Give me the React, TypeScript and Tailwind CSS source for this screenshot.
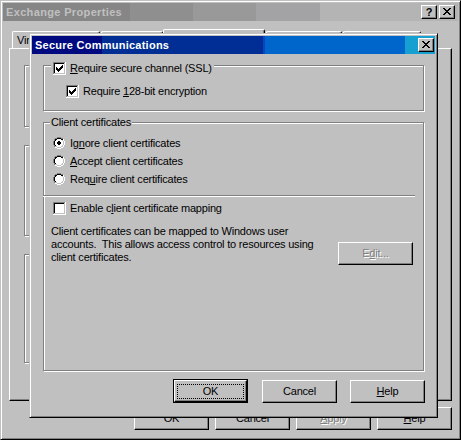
import React from "react";

// classic 3D palette
const PAL: Record<string, string> = {
  G: "#808080",
  K: "#000000",
  W: "#ffffff",
  F: "#c0c0c0",
};

// tiny pixel-map renderer for the checkbox / radio / caption glyphs
function Pix({ rows }: { rows: string[] }) {
  const rects: React.ReactNode[] = [];
  rows.forEach((row, y) => {
    let x = 0;
    while (x < row.length) {
      const c = row[x];
      let e = x + 1;
      while (e < row.length && row[e] === c) e++;
      if (c !== ".") {
        rects.push(<rect key={`${x}-${y}`} x={x} y={y} width={e - x} height={1} fill={PAL[c]} />);
      }
      x = e;
    }
  });
  return (
    <svg width={rows[0].length} height={rows.length} shapeRendering="crispEdges" className="block shrink-0">
      {rects}
    </svg>
  );
}

const TICK = ["......K", ".....KK", "K...KKK", "KK.KKK.", "KKKKK..", ".KKK...", "..K...."];

function checkRows(on: boolean) {
  const rows = ["GGGGGGGGGGGGW", "GKKKKKKKKKKFW"];
  for (let i = 0; i < 9; i++) {
    const inner = "WWWWWWWWW".split("");
    if (on && i >= 1 && i <= 7) {
      for (let j = 0; j < 7; j++) if (TICK[i - 1][j] === "K") inner[j + 1] = "K";
    }
    rows.push("GK" + inner.join("") + "FW");
  }
  rows.push("GFFFFFFFFFFFW");
  rows.push("WWWWWWWWWWWWW");
  return rows;
}

const RADIO = [
  "....GGGG....",
  "..GGKKKKGG..",
  ".GKKWWWWKKW.",
  ".GKWWWWWWFW.",
  "GKWWWWWWWWFW",
  "GKWWWWWWWWFW",
  "GKWWWWWWWWFW",
  "GKWWWWWWWWFW",
  ".GKWWWWWWFW.",
  ".GFFWWWWFFW.",
  "..WWFFFFWW..",
  "....WWWW....",
];

function radioRows(on: boolean) {
  if (!on) return RADIO;
  return RADIO.map((row, y) => {
    const r = row.split("");
    if (y === 4 || y === 7) {
      r[5] = "K";
      r[6] = "K";
    }
    if (y === 5 || y === 6) for (let x = 4; x <= 7; x++) r[x] = "K";
    return r.join("");
  });
}

const CLOSE_X = ["KK....KK", ".KK..KK.", "..KKKK..", "...KK...", "..KKKK..", ".KK..KK.", "KK....KK"];

const BODY_FONT = "font-['Liberation_Sans',Arial,sans-serif] text-[11px] leading-[13px] tracking-[-0.2px] text-black";
const RAISED = "border border-t-white border-l-white border-r-black border-b-black shadow-[inset_-1px_-1px_0_#808080]";
const ETCHED = "border border-[#808080] shadow-[inset_1px_1px_0_#fff,1px_1px_0_#fff]";
const WINDOW_FRAME =
  "border border-t-[#c0c0c0] border-l-[#c0c0c0] border-r-black border-b-black p-[2px] shadow-[inset_1px_1px_0_#fff,inset_-1px_-1px_0_#808080]";

function CaptionButton({ children }: { children: React.ReactNode }) {
  return (
    <div className={`flex h-[14px] w-[16px] items-start justify-center bg-[#c0c0c0] pt-[2px] ${RAISED}`}>{children}</div>
  );
}

function Check({ on, children }: { on: boolean; children: React.ReactNode }) {
  return (
    <div className="flex h-[13px] items-center gap-[4px]">
      <Pix rows={checkRows(on)} />
      <span className="whitespace-nowrap">{children}</span>
    </div>
  );
}

function Radio({ on, children }: { on: boolean; children: React.ReactNode }) {
  return (
    <div className="flex h-[13px] items-start gap-[5px]">
      <Pix rows={radioRows(on)} />
      <span className="whitespace-nowrap">{children}</span>
    </div>
  );
}

function PushButton({
  children,
  disabled,
  className = "",
}: {
  children: React.ReactNode;
  disabled?: boolean;
  className?: string;
}) {
  return (
    <div
      className={`flex h-[23px] w-[75px] shrink-0 items-center justify-center bg-[#c0c0c0] ${RAISED} ${
        disabled ? "text-[#808080] [text-shadow:1px_1px_0_#fff]" : ""
      } ${className}`}
    >
      {children}
    </div>
  );
}

function DefaultButton({ children }: { children: React.ReactNode }) {
  return (
    <div className="h-[24px] w-[75px] shrink-0 border border-black bg-[#c0c0c0]">
      <div className={`flex h-full w-full items-center justify-center ${RAISED} border-t-white`}>
        <div className="flex h-[15px] w-[67px] items-center justify-center border border-dotted border-black">
          {children}
        </div>
      </div>
    </div>
  );
}

function Tab({ label, className = "", selected }: { label: string; className?: string; selected?: boolean }) {
  return (
    <div
      className={`shrink-0 overflow-hidden whitespace-nowrap rounded-t-[2px] border-t border-r border-l border-t-white border-l-white border-r-black px-[4px] pt-[2px] shadow-[inset_-1px_0_0_#808080] ${
        selected ? "h-[19px]" : "h-[17px]"
      } ${className}`}
    >
      {label}
    </div>
  );
}

function ExchangeProperties() {
  return (
    <div className={`flex h-[440px] w-[461px] flex-col bg-[#c0c0c0] ${WINDOW_FRAME}`}>
      {/* inactive caption */}
      <div className="flex h-[18px] shrink-0 items-center justify-between bg-[linear-gradient(to_right,#868686_127px,#8f8f8f_127px,#8f8f8f_190px,#999999_190px,#999999_253px,#a3a3a6_253px,#a3a3a6_317px,#b4b4b4_317px)] pl-[3px] pr-[3px]">
        <span className="font-bold tracking-[0.35px] text-[#c0c0c0]">Exchange Properties</span>
        <div className="flex gap-[2px]">
          <CaptionButton>
            <span className="mt-[-2px] text-[11px] font-bold leading-[12px] tracking-normal">?</span>
          </CaptionButton>
          <CaptionButton>
            <Pix rows={CLOSE_X} />
          </CaptionButton>
        </div>
      </div>

      <div className="flex flex-col px-[6px]">
        {/* tab strip */}
        <div className="flex h-[27px] items-end pl-[3px]">
          <Tab label="Virtual Directory" className="w-[88px]" />
          <Tab label="Documents" className="ml-[1px] w-[62px]" />
          <Tab label="Directory Security" className="w-[102px]" selected />
          <Tab label="HTTP Headers" className="ml-[1px] w-[76px]" />
          <Tab label="Custom Errors" className="ml-[1px] w-[78px]" />
        </div>

        {/* tab page */}
        <div className="flex h-[353px] flex-col border border-t-white border-l-white border-r-black border-b-black pl-[14px] pt-[16px] shadow-[inset_-1px_-1px_0_#808080]">
          <div className={`h-[62px] w-[400px] ${ETCHED}`} />
          <div className={`mt-[18px] h-[91px] w-[400px] ${ETCHED}`} />
          <div className={`mt-[18px] h-[109px] w-[400px] ${ETCHED}`} />
        </div>

        <div className="mt-[6px] flex justify-end gap-[6px]">
          <PushButton>OK</PushButton>
          <PushButton>Cancel</PushButton>
          <PushButton disabled>
            <u>A</u>pply
          </PushButton>
          <PushButton>
            <u>H</u>elp
          </PushButton>
        </div>
      </div>
    </div>
  );
}

function SecureCommunications() {
  return (
    <div className={`absolute left-[29px] top-[33px] flex w-[409px] flex-col bg-[#c0c0c0] ${WINDOW_FRAME}`}>
      {/* active caption */}
      <div className="flex h-[18px] shrink-0 items-center justify-between bg-[linear-gradient(to_right,#000a80_70px,#002e94_70px,#002e94_231px,#0a44c4_231px,#0a44c4_233px,#0066cc_233px,#0066cc_373px,#16a0d2_373px)] pl-[3px] pr-[1px]">
        <span className="font-bold tracking-[0.25px] text-white">Secure Communications</span>
        <CaptionButton>
          <Pix rows={CLOSE_X} />
        </CaptionButton>
      </div>

      <div className="flex flex-col px-[11px] pt-[11px] pb-[12px]">
        {/* SSL group, captioned by its own checkbox */}
        <div className={`h-[46px] ${ETCHED}`}>
          <div className="-mt-[4px] ml-[7px] w-fit bg-[#c0c0c0] px-[2px]">
            <Check on>
              <u>R</u>equire secure channel (SSL)
            </Check>
          </div>
          <div className="ml-[22px] mt-[10px] w-fit">
            <Check on>
              Require <u>1</u>28-bit encryption
            </Check>
          </div>
        </div>

        <div className={`mt-[11px] h-[249px] ${ETCHED}`}>
          <div className="-mt-[7px] ml-[6px] w-fit bg-[#c0c0c0] px-[1px]">Client certificates</div>
          <div className="ml-[9px] mt-[8px] flex flex-col gap-[5px]">
            <Radio on>
              Ig<u>n</u>ore client certificates
            </Radio>
            <Radio on={false}>
              <u>A</u>ccept client certificates
            </Radio>
            <Radio on={false}>
              Req<u>u</u>ire client certificates
            </Radio>
          </div>

          <div className="-ml-[1px] mt-[9px] h-[2px] w-[372px] border-t border-b border-t-[#808080] border-b-white" />

          <div className="ml-[9px] mt-[5px] w-fit">
            <Check on={false}>
              Enable c<u>l</u>ient certificate mapping
            </Check>
          </div>

          <div className="mt-[10px] flex items-start justify-between pl-[7px] pr-[10px]">
            <p className="whitespace-nowrap">
              Client certificates can be mapped to Windows user
              <br />
              {"accounts.\u00a0 This allows access control to resources using"}
              <br />
              client certificates.
            </p>
            <PushButton disabled className="mt-[17px]">
              E<u>d</u>it...
            </PushButton>
          </div>
        </div>

        <div className="-mr-[1px] mt-[8px] flex items-end justify-end">
          <DefaultButton>OK</DefaultButton>
          <PushButton className="ml-[14px]">Cancel</PushButton>
          <PushButton className="ml-[13px]">
            <u>H</u>elp
          </PushButton>
        </div>
      </div>
    </div>
  );
}

export default function App() {
  return (
    <div className={`relative h-[440px] w-[461px] overflow-hidden bg-[#c0c0c0] ${BODY_FONT}`}>
      <ExchangeProperties />
      <SecureCommunications />
    </div>
  );
}
